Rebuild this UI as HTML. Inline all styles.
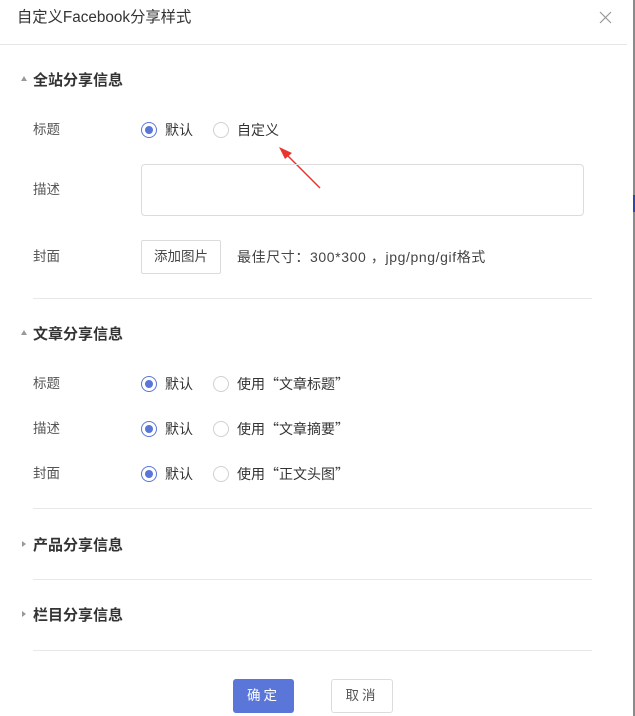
<!DOCTYPE html>
<html><head><meta charset="utf-8"><style>
*{margin:0;padding:0;box-sizing:border-box}
body{width:635px;height:716px;background:#fff;position:relative;overflow:hidden;font-family:"Liberation Sans","Noto Sans CJK SC",sans-serif;color:#333;font-size:14px}
.a{position:absolute;white-space:nowrap;line-height:1}
.q{font-family:"Noto Sans CJK SC",sans-serif}
.h{font-weight:bold;font-size:15px;color:#333}
.lab{color:#555;font-size:13.5px}
.hr{position:absolute;left:33px;width:559px;height:1px;background:#e8e8e8}
.r{position:absolute;width:16px;height:16px;border-radius:50%;border:1px solid #d0d0d0;background:#fff}
.r.on{border-color:#5a76d8}
.r.on:after{content:"";position:absolute;left:3px;top:3px;width:8px;height:8px;border-radius:50%;background:#5a76d8}
.tri{position:absolute;width:0;height:0}
.tu{border-left:3px solid transparent;border-right:3px solid transparent;border-bottom:5px solid #999}
.tr{border-top:3px solid transparent;border-bottom:3px solid transparent;border-left:4px solid #999}
</style></head><body>
<div style="position:absolute;left:633px;top:0;width:2px;height:716px;background:#8a8a8a"></div>
<div style="position:absolute;left:633px;top:195px;width:2px;height:17px;background:#2a4aa8"></div>
<div class="a" style="left:17px;top:10px;font-size:15.3px;color:#333">自定义Facebook分享样式</div>
<svg class="a" style="left:599px;top:11px" width="13" height="13"><path d="M1 1L12 12M12 1L1 12" stroke="#999" stroke-width="1.2"/></svg>
<div style="position:absolute;left:0;top:44px;width:627px;height:1px;background:#e5e5e5"></div>

<div class="tri tu" style="left:21px;top:76px"></div>
<div class="a h" style="left:33px;top:73px">全站分享信息</div>
<div class="a lab" style="left:33px;top:123px">标题</div>
<div class="r on" style="left:141px;top:122px"></div><div class="a" style="left:165px;top:123px">默认</div>
<div class="r" style="left:213px;top:122px"></div><div class="a" style="left:237px;top:123px">自定义</div>
<svg class="a" style="left:270px;top:140px" width="60" height="55"><path d="M50 48L12 10" stroke="#e8352f" stroke-width="1.5"/><path d="M9 7L22 13L15 19Z" fill="#e8352f"/></svg>
<div class="a lab" style="left:33px;top:183px">描述</div>
<div style="position:absolute;left:141px;top:164px;width:443px;height:52px;border:1px solid #dcdcdc;border-radius:4px"></div>
<div class="a lab" style="left:33px;top:250px">封面</div>
<div style="position:absolute;left:141px;top:240px;width:80px;height:34px;border:1px solid #dcdcdc;border-radius:2px;text-align:center;line-height:32px;font-size:13.5px;color:#444">添加图片</div>
<div class="a" style="left:237px;top:250px;color:#444;letter-spacing:0.6px">最佳尺寸<span class="q">：</span>300*300 <span class="q">，</span>jpg/png/gif格式</div>
<div class="hr" style="top:298px"></div>

<div class="tri tu" style="left:21px;top:330px"></div>
<div class="a h" style="left:33px;top:327px">文章分享信息</div>
<div class="a lab" style="left:33px;top:377px">标题</div>
<div class="r on" style="left:141px;top:376px"></div><div class="a" style="left:165px;top:377px">默认</div>
<div class="r" style="left:213px;top:376px"></div><div class="a" style="left:237px;top:377px">使用<span class="q">“</span>文章标题<span class="q">”</span></div>
<div class="a lab" style="left:33px;top:422px">描述</div>
<div class="r on" style="left:141px;top:421px"></div><div class="a" style="left:165px;top:422px">默认</div>
<div class="r" style="left:213px;top:421px"></div><div class="a" style="left:237px;top:422px">使用<span class="q">“</span>文章摘要<span class="q">”</span></div>
<div class="a lab" style="left:33px;top:467px">封面</div>
<div class="r on" style="left:141px;top:466px"></div><div class="a" style="left:165px;top:467px">默认</div>
<div class="r" style="left:213px;top:466px"></div><div class="a" style="left:237px;top:467px">使用<span class="q">“</span>正文头图<span class="q">”</span></div>
<div class="hr" style="top:508px"></div>

<div class="tri tr" style="left:22px;top:541px"></div>
<div class="a h" style="left:33px;top:538px">产品分享信息</div>
<div class="hr" style="top:579px"></div>
<div class="tri tr" style="left:22px;top:611px"></div>
<div class="a h" style="left:33px;top:608px">栏目分享信息</div>
<div class="hr" style="top:650px"></div>

<div style="position:absolute;left:233px;top:679px;width:61px;height:34px;background:#5a76d8;border-radius:3px;color:#fff;text-align:center;line-height:34px;font-size:13.5px;letter-spacing:3px">确定</div>
<div style="position:absolute;left:331px;top:679px;width:62px;height:34px;border:1px solid #dcdcdc;border-radius:3px;color:#555;text-align:center;line-height:32px;font-size:13.5px;letter-spacing:3px">取消</div>
</body></html>
